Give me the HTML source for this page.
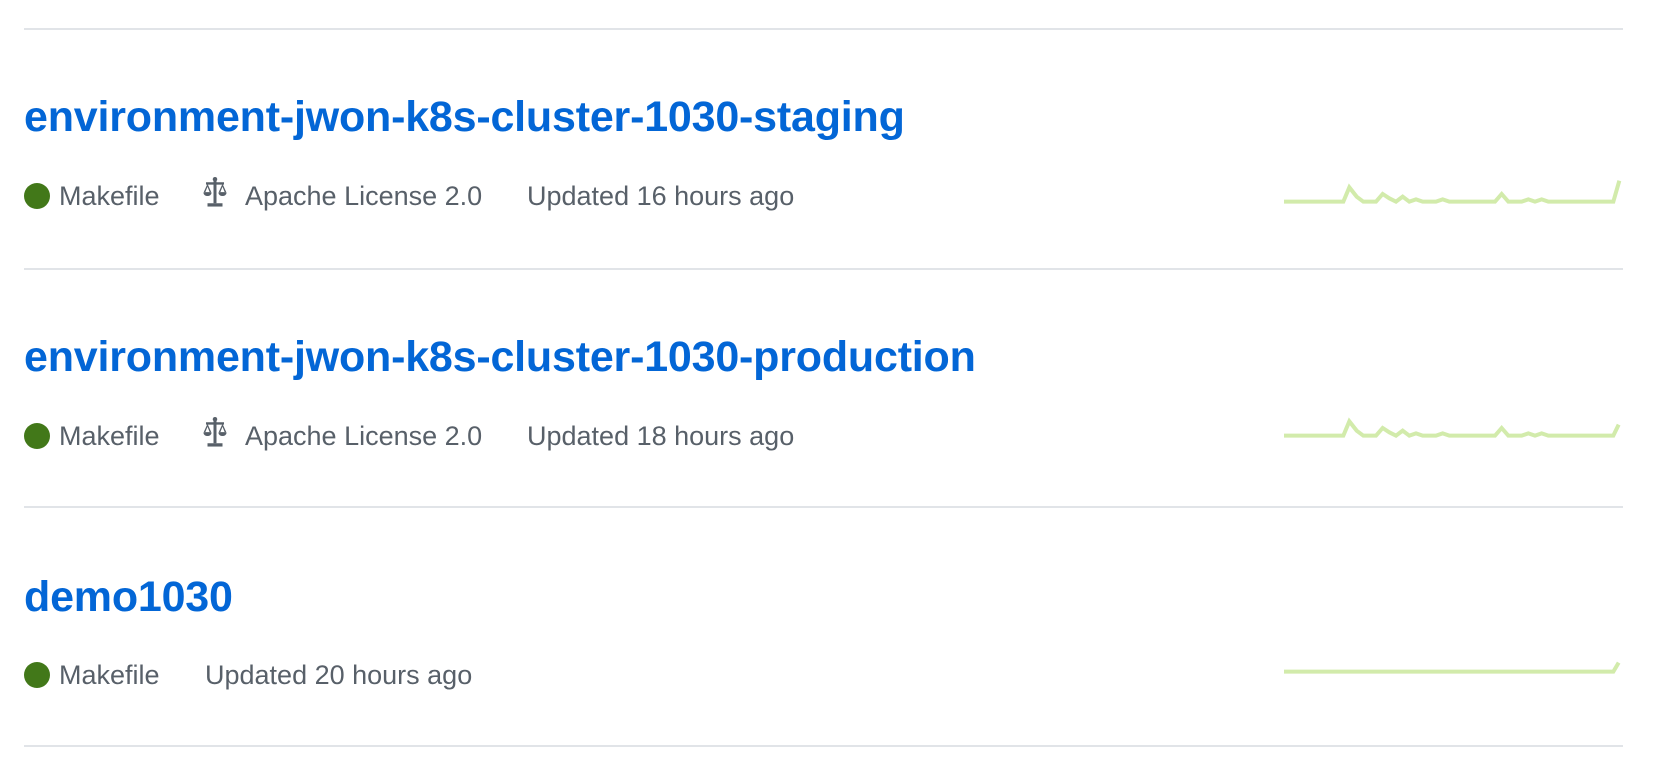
<!DOCTYPE html>
<html><head><meta charset="utf-8"><style>
body{margin:0;width:1656px;height:770px;background:#fff;position:relative;overflow:hidden;font-family:"Liberation Sans",Arial,sans-serif}
.hr{position:absolute;left:24px;width:1599px;height:2px;background:#e1e4e8}
.t{position:absolute;left:24px;font-size:43px;font-weight:bold;color:#0366d6;line-height:1;letter-spacing:-0.2px}
.m{position:absolute;font-size:27px;color:#586069;line-height:1}
.dot{position:absolute;left:24px;width:26px;height:26px;border-radius:50%;background:#427819}
svg.s{position:absolute;left:1200px}
svg.i{position:absolute;left:203px}
</style></head><body>
<div class="hr" style="top:28px"></div>
<div class="hr" style="top:268px"></div>
<div class="hr" style="top:506px"></div>
<div class="hr" style="top:745px"></div>

<div class="t" style="top:96px">environment-jwon-k8s-cluster-1030-staging</div>
<div class="dot" style="top:183px"></div>
<div class="m" style="left:59px;top:183px">Makefile</div>
<svg class="i" style="top:176px" width="24" height="32" viewBox="0 0 16 21"><g fill="#586069"><rect x="7" y="1" width="2" height="17"/><rect x="2" y="4" width="12" height="1.6"/><rect x="3" y="18" width="10" height="2.2"/><circle cx="8" cy="2" r="1.5"/><path d="M3 5 L0.3 11 H5.7 Z M3 7 L1.6 10.5 H4.4Z" fill-rule="evenodd"/><path d="M13 5 L10.3 11 H15.7 Z M13 7 L11.6 10.5 H14.4Z" fill-rule="evenodd"/><path d="M0.3 11 A2.7 2.2 0 0 0 5.7 11Z M10.3 11 A2.7 2.2 0 0 0 15.7 11Z"/></g></svg>
<div class="m" style="left:245px;top:183px">Apache License 2.0</div>
<div class="m" style="left:527px;top:183px">Updated 16 hours ago</div>
<svg class="s" style="top:150px" width="456" height="80" viewBox="0 0 1368 240"><polyline fill="none" stroke="#d2ebab" stroke-width="12" points="252,155 430,155 448,112 470,140 490,155 528,155 548,132 568,145 588,155 608,140 628,155 648,148 668,155 708,155 728,148 748,155 885,155 905,132 925,155 965,155 985,148 1005,155 1025,148 1045,155 1240,155 1258,92"/></svg>

<div class="t" style="top:336px">environment-jwon-k8s-cluster-1030-production</div>
<div class="dot" style="top:423px"></div>
<div class="m" style="left:59px;top:423px">Makefile</div>
<svg class="i" style="top:416px" width="24" height="32" viewBox="0 0 16 21"><g fill="#586069"><rect x="7" y="1" width="2" height="17"/><rect x="2" y="4" width="12" height="1.6"/><rect x="3" y="18" width="10" height="2.2"/><circle cx="8" cy="2" r="1.5"/><path d="M3 5 L0.3 11 H5.7 Z M3 7 L1.6 10.5 H4.4Z" fill-rule="evenodd"/><path d="M13 5 L10.3 11 H15.7 Z M13 7 L11.6 10.5 H14.4Z" fill-rule="evenodd"/><path d="M0.3 11 A2.7 2.2 0 0 0 5.7 11Z M10.3 11 A2.7 2.2 0 0 0 15.7 11Z"/></g></svg>
<div class="m" style="left:245px;top:423px">Apache License 2.0</div>
<div class="m" style="left:527px;top:423px">Updated 18 hours ago</div>
<svg class="s" style="top:384px" width="456" height="80" viewBox="0 0 1368 240"><polyline fill="none" stroke="#d2ebab" stroke-width="12" points="252,155 430,155 448,112 470,140 490,155 528,155 548,132 568,145 588,155 608,140 628,155 648,148 668,155 708,155 728,148 748,155 885,155 905,132 925,155 965,155 985,148 1005,155 1025,148 1045,155 1240,155 1256,122"/></svg>

<div class="t" style="top:576px">demo1030</div>
<div class="dot" style="top:662px"></div>
<div class="m" style="left:59px;top:662px">Makefile</div>
<div class="m" style="left:205px;top:662px">Updated 20 hours ago</div>
<svg class="s" style="top:620px" width="456" height="80" viewBox="0 0 1368 240"><polyline fill="none" stroke="#d2ebab" stroke-width="12" points="252,155 1240,155 1256,128"/></svg>
</body></html>
